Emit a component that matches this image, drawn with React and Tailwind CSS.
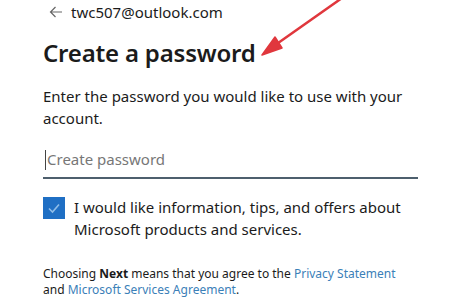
import React from "react";

const App = () => {
  return (
    <div className="relative w-[456px] h-[305px] overflow-hidden bg-white text-[#1b1b1b] font-['Noto_Sans',sans-serif]">
      <div className="pl-[43px] pr-[38px]">
        <div className="flex items-center gap-[8px] pt-[2px] h-[22px] text-[15px] leading-[20px]">
          <svg className="ml-[6px]" width="14" height="12" viewBox="0 0 14 12">
            <path d="M13 6 H1.5 M6.5 1 L1.5 6 L6.5 11" fill="none" stroke="#666" strokeWidth="1.2" />
          </svg>
          <span>twc507@outlook.com</span>
        </div>
        <h1 className="mt-[16px] text-[24px] leading-[30px] font-semibold tracking-[-0.2px]">
          Create a password
        </h1>
        <p className="mt-[17px] text-[15px] leading-[22px]">
          Enter the password you would like to use with your account.
        </p>
        <div className="mt-[13px] h-[37px] flex items-center border-b-2 border-[#4d5f6d] w-[375px]">
          <span className="w-px h-[20px] bg-[#444] ml-[2px]" />
          <span className="text-[15px] text-[#777] ml-[1px]">Create password</span>
        </div>
        <div className="mt-[18px] flex gap-[9px]">
          <div className="w-[22px] h-[22px] shrink-0 bg-[#1f6fc4] flex items-center justify-center">
            <svg width="14" height="14" viewBox="0 0 14 14">
              <path d="M2 7.5 L5.5 11 L12 3.5" fill="none" stroke="#8fbde8" strokeWidth="1.6" />
            </svg>
          </div>
          <p className="text-[15px] leading-[22px] -mt-[1px]">
            I would like information, tips, and offers about Microsoft products and services.
          </p>
        </div>
        <p className="mt-[26px] text-[12px] leading-[16px]">
          Choosing <b>Next</b> means that you agree to the{" "}
          <span className="text-[#3b80b8]">Privacy Statement</span> and{" "}
          <span className="text-[#3b80b8]">Microsoft Services Agreement</span>.
        </p>
      </div>
      <svg className="absolute left-0 top-0" width="456" height="305" viewBox="0 0 456 305">
        <line x1="342" y1="-2" x2="271" y2="48" stroke="#e0373d" strokeWidth="2.5" strokeLinecap="round" />
        <path d="M262 55 L275 37 L282 48 Z" fill="#e0373d" stroke="#e0373d" strokeWidth="1.5" strokeLinejoin="round" />
      </svg>
    </div>
  );
};

export default App;
